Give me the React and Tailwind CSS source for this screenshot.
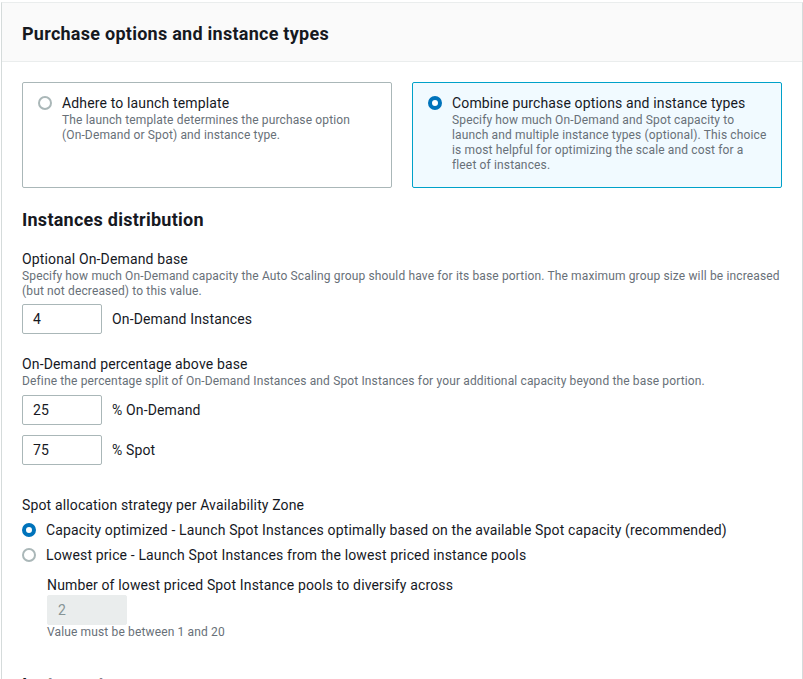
import React from 'react'

const Radio = ({ checked }) =>
  checked ? (
    <span className="mt-[3px] box-border block h-[14px] w-[14px] shrink-0 rounded-full border-[4px] border-[#0073bb] bg-white" />
  ) : (
    <span className="mt-[3px] box-border block h-[14px] w-[14px] shrink-0 rounded-full border-2 border-[#aab7b8] bg-white" />
  )

const OptionCard = ({ selected, title, children }) => (
  <div
    className={
      selected
        ? 'flex gap-[10px] rounded-[2px] border border-[#00a1c9] bg-[#f1faff] pb-[14px] pl-[15px] pr-[8px] pt-[10px]'
        : 'flex gap-[10px] rounded-[2px] border border-[#aab7b8] bg-white pb-[14px] pl-[15px] pr-[8px] pt-[10px]'
    }
  >
    <Radio checked={selected} />
    <div>
      <div className="text-[14px] leading-[20px] text-[#16191f]">{title}</div>
      <p className="whitespace-nowrap text-[12px] leading-[15px] text-[#687078]">{children}</p>
    </div>
  </div>
)

const NumberField = ({ value, disabled }) => (
  <div
    className={
      disabled
        ? 'flex h-[30px] w-[80px] items-center rounded-[2px] border border-[#eaeded] bg-[#eaeded] pl-[10px] text-[14px] text-[#879596]'
        : 'flex h-[30px] w-[80px] items-center rounded-[2px] border border-[#aab7b8] bg-white pl-[10px] text-[14px] text-[#16191f]'
    }
  >
    {value}
  </div>
)

const Label = ({ children }) => (
  <div className="text-[14px] leading-[20px] text-[#16191f]">{children}</div>
)

const Hint = ({ children }) => (
  <p className="text-[12px] leading-[15px] text-[#687078]">{children}</p>
)

export default function App() {
  return (
    <div className="h-[679px] w-[803px] overflow-hidden bg-white pl-[1px] pt-[2px] font-['Roboto',sans-serif] tracking-[0.14px] text-[#16191f]">
      <div className="h-full border-x border-t border-x-[#d5dbdb] border-t-[#eaeded]">
        <div className="border-b border-[#eaeded] bg-[#fafafa] px-5 pb-[14px] pt-[18px]">
          <h2 className="text-[18px] font-bold leading-[26px] tracking-[0.26px]">Purchase options and instance types</h2>
        </div>

        <div className="px-5 pt-5">
          <div className="grid grid-cols-2 gap-5">
            <OptionCard title="Adhere to launch template">
              The launch template determines the purchase option
              <br />
              (On-Demand or Spot) and instance type.
            </OptionCard>
            <OptionCard selected title="Combine purchase options and instance types">
              Specify how much On-Demand and Spot capacity to
              <br />
              launch and multiple instance types (optional). This choice
              <br />
              is most helpful for optimizing the scale and cost for a
              <br />
              fleet of instances.
            </OptionCard>
          </div>

          <h3 className="mt-[19px] text-[18px] font-bold leading-[26px] tracking-[0.26px]">Instances distribution</h3>

          <div className="mt-[16px]">
            <Label>Optional On-Demand base</Label>
            <Hint>
              Specify how much On-Demand capacity the Auto Scaling group should have for its base portion. The
              maximum group size will be increased (but not decreased) to this value.
            </Hint>
            <div className="mt-[5px] flex items-center gap-[10px]">
              <NumberField value="4" />
              <span className="text-[14px]">On-Demand Instances</span>
            </div>
          </div>

          <div className="mt-5">
            <Label>On-Demand percentage above base</Label>
            <Hint>
              Define the percentage split of On-Demand Instances and Spot Instances for your additional capacity
              beyond the base portion.
            </Hint>
            <div className="mt-[6px] flex flex-col gap-[10px]">
              <div className="flex items-center gap-[10px]">
                <NumberField value="25" />
                <span className="text-[14px]">% On-Demand</span>
              </div>
              <div className="flex items-center gap-[10px]">
                <NumberField value="75" />
                <span className="text-[14px]">% Spot</span>
              </div>
            </div>
          </div>

          <div className="mt-[30px]">
            <Label>Spot allocation strategy per Availability Zone</Label>
            <div className="mt-[5px] flex flex-col gap-[5px]">
              <div className="flex gap-[10px]">
                <Radio checked />
                <Label>
                  Capacity optimized - Launch Spot Instances optimally based on the available Spot capacity
                  (recommended)
                </Label>
              </div>
              <div className="flex gap-[10px]">
                <Radio />
                <Label>Lowest price - Launch Spot Instances from the lowest priced instance pools</Label>
              </div>
            </div>
            <div className="mt-[10px] pl-[25px]">
              <Label>Number of lowest priced Spot Instance pools to diversify across</Label>
              <NumberField value="2" disabled />
              <Hint>Value must be between 1 and 20</Hint>
            </div>
          </div>

          <h3 className="mt-[32px] text-[18px] font-bold leading-[26px] tracking-[0.26px]">Instance types</h3>
        </div>
      </div>
    </div>
  )
}
